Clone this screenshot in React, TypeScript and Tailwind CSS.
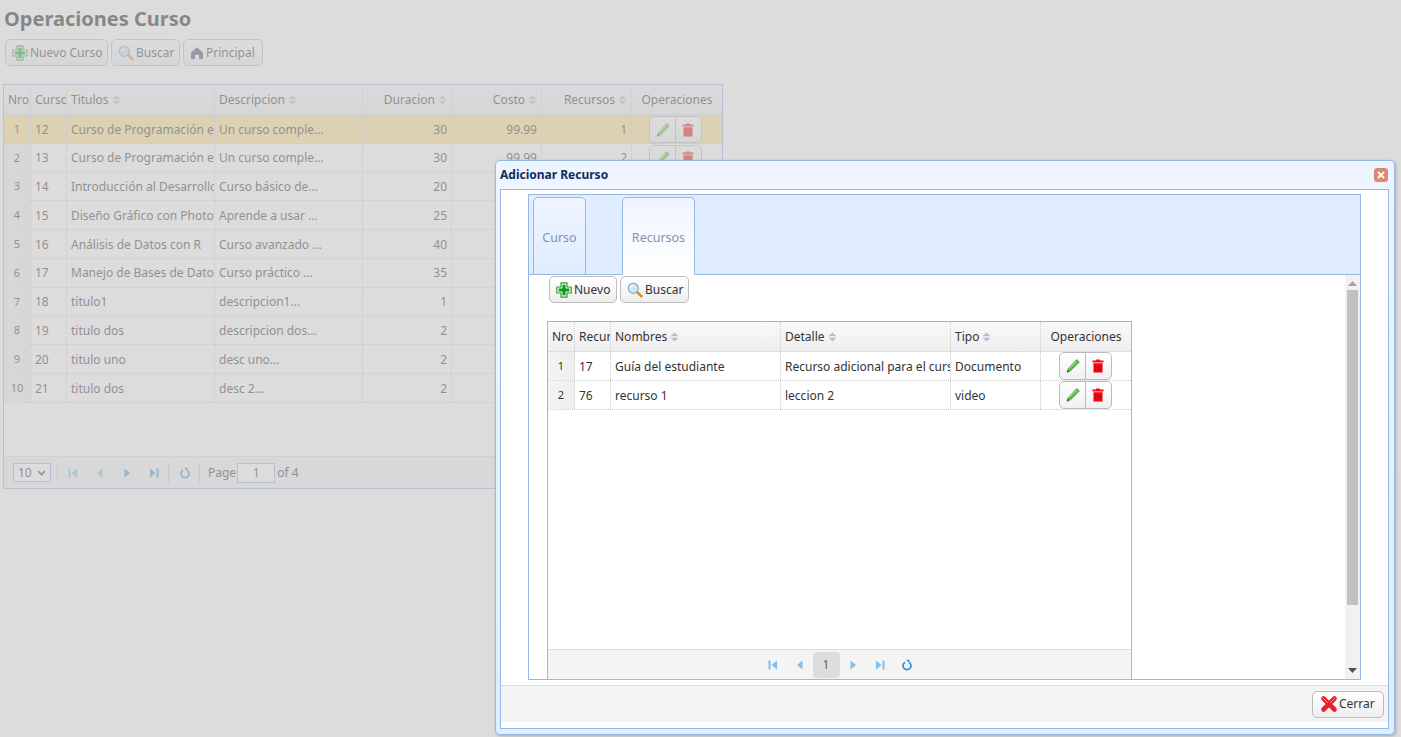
import React from "react";

const font = { fontFamily: '"Noto Sans", "Liberation Sans", sans-serif' };

function AddIcon() {
  return (
    <svg width="16" height="16" viewBox="0 0 16 16" className="shrink-0">
      <path d="M5 .8h6v4.200h4.200v6H11v4.200H5V11H.8V5H5z" fill="#e8f7e0" stroke="#3c9a3c" strokeWidth="1.200" strokeLinejoin="round" />
      <path d="M6.500 2.800h3v3.700h3.700v3H9.500v3.700h-3V9.500H2.800v-3h3.700z" fill="#0d9a20" />
    </svg>
  );
}
function SearchIcon() {
  return (
    <svg width="16" height="16" viewBox="0 0 16 16" className="shrink-0">
      <path d="M9.800 9.800l4.600 4.500" stroke="#d9922e" strokeWidth="2.600" strokeLinecap="round" />
      <circle cx="6.300" cy="6.300" r="5" fill="#cfe6f8" stroke="#8fa7bd" strokeWidth="1.200" />
      <path d="M3.400 6a3 3 0 0 1 2.800-2.700" stroke="#fff" strokeWidth="1.200" fill="none" />
    </svg>
  );
}
function HomeIcon() {
  return (
    <svg width="14" height="14" viewBox="0 0 14 14" className="shrink-0">
      <path d="M7 1.200L13 6.800V13H9V8.800H5V13H1V6.800z" fill="#3f4566" />
    </svg>
  );
}
function PencilIcon() {
  return (
    <svg width="16" height="16" viewBox="0 0 16 16">
      <path d="M11.800 1.500l2.600 2.500L5.400 13 2 14.300l1.100-3.500z" fill="#5cb83c" stroke="#3f9028" strokeWidth="0.600" strokeLinejoin="round" />
      <path d="M11.400 3.400l-7.400 7.400" stroke="#c5eeaa" strokeWidth="1" />
      <path d="M2 14.300l.7-2.200 1.500 1.500z" fill="#4a4a4a" />
    </svg>
  );
}
function TrashIcon() {
  return (
    <svg width="16" height="16" viewBox="0 0 16 16">
      <path d="M6.200 1.400h3.600l.5 1.100h3.200v1.900H2.500V2.500h3.200z" fill="#ff0a14" />
      <path d="M3.400 5.200h9.200v9.400H3.400z" fill="#ff0a14" />
      <path d="M5.800 6.600v6.600M8 6.600v6.600M10.200 6.600v6.600" stroke="#a80a10" strokeWidth="1" />
    </svg>
  );
}
function CancelIcon() {
  return (
    <svg width="18" height="18" viewBox="0 0 18 18" className="shrink-0">
      <path d="M3.500 3.500l11 11M14.500 3.500l-11 11" stroke="#e8222c" strokeWidth="4.600" strokeLinecap="round" />
      <path d="M3 3l4.500 4.500M15 3l-4.500 4.500" stroke="#fb9a9a" strokeWidth="1" strokeLinecap="round" />
    </svg>
  );
}
function SortIcon() {
  return (
    <svg width="9" height="10" viewBox="0 0 9 10" className="ml-[3px] shrink-0">
      <path d="M4.500 .5L8.500 4.300H.5z" fill="#b9bec5" />
      <path d="M4.500 9.500L8.500 5.700H.5z" fill="#b9bec5" />
    </svg>
  );
}
type PagerKind = "first" | "prev" | "next" | "last" | "reload";
function PagerIcon({ kind, strong }: { kind: PagerKind; strong?: boolean }) {
  const c = strong ? "#3a95dc" : "#7cc0ee";
  return (
    <svg width="12" height="12" viewBox="0 0 12 12" className="shrink-0">
      {kind === "first" && (
        <>
          <rect x="1.500" y="1.500" width="2" height="9" fill={c} />
          <path d="M10 1.500v9L4.500 6z" fill={c} />
        </>
      )}
      {kind === "prev" && <path d="M8.500 1.500v9L3 6z" fill={c} />}
      {kind === "next" && <path d="M3.500 1.500v9L9 6z" fill={c} />}
      {kind === "last" && (
        <>
          <rect x="8.500" y="1.500" width="2" height="9" fill={c} />
          <path d="M2 1.500v9L7.500 6z" fill={c} />
        </>
      )}
      {kind === "reload" && (
        <>
          <path d="M4 3.200a4 4 0 1 0 4 0" fill="none" stroke="#2f8fdc" strokeWidth="1.700" />
          <path d="M5 .8h3.400v3.200z" fill="#2f8fdc" />
        </>
      )}
    </svg>
  );
}

function Btn({ icon, label, w }: { icon: React.ReactNode; label: string; w: string }) {
  return (
    <div className={`${w} h-[27px] flex items-center pl-[6px] gap-[2px] rounded-[5px] border border-[#bbb] bg-gradient-to-b from-white to-[#eeeeee] text-[12px] text-[#333] whitespace-nowrap`}>
      {icon}
      <span className="pt-px">{label}</span>
    </div>
  );
}

function OpsBtn({ h }: { h: string }) {
  return (
    <div className={`flex w-[53px] ${h} rounded-[5px] border border-[#bbb] bg-gradient-to-b from-white to-[#f0f0f0]`}>
      <div className="w-[26px] flex items-center justify-center border-r border-[#bbb]"><PencilIcon /></div>
      <div className="flex-1 flex items-center justify-center pr-[2px]"><TrashIcon /></div>
    </div>
  );
}

const outerCols = "grid grid-cols-[27px_36px_148px_148px_89px_90px_90px_90px]";
const innerCols = "grid grid-cols-[27px_36px_170px_170px_90px_90px]";
const cellLine = "border-r border-dotted border-[#ccc]";

type OuterRow = [string, string, string, string, string, string, string];
const outerRows: OuterRow[] = [
  ["1", "12", "Curso de Programación en Python", "Un curso comple...", "30", "99.99", "1"],
  ["2", "13", "Curso de Programación en Java", "Un curso comple...", "30", "99.99", "2"],
  ["3", "14", "Introducción al Desarrollo Web", "Curso básico de...", "20", "49.99", "1"],
  ["4", "15", "Diseño Gráfico con Photoshop", "Aprende a usar ...", "25", "79.99", "0"],
  ["5", "16", "Análisis de Datos con R", "Curso avanzado ...", "40", "89.99", "0"],
  ["6", "17", "Manejo de Bases de Datos SQL", "Curso práctico ...", "35", "59.99", "2"],
  ["7", "18", "titulo1", "descripcion1...", "1", "1.00", "0"],
  ["8", "19", "titulo dos", "descripcion dos...", "2", "2.00", "0"],
  ["9", "20", "titulo uno", "desc uno...", "2", "2.00", "0"],
  ["10", "21", "titulo dos", "desc 2...", "2", "2.00", "0"],
];

function Head({ label, sort, right }: { label: string; sort?: boolean; right?: boolean }) {
  return (
    <div className={`${cellLine} flex items-center overflow-hidden whitespace-nowrap px-[4px] pt-px ${right ? "justify-end" : ""}`}>
      <span>{label}</span>
      {sort && <SortIcon />}
    </div>
  );
}
function Cell({ children, right }: { children?: React.ReactNode; right?: boolean }) {
  return (
    <div className={`${cellLine} flex items-center overflow-hidden whitespace-nowrap px-[4px] pt-px ${right ? "justify-end" : ""}`}>
      {children}
    </div>
  );
}

function Background() {
  return (
    <div className="px-[3px] text-[#2c2c2c]">
      <h1 className="pt-[6px] pl-[1px] text-[20px] leading-[26px] font-bold text-[#111]">Operaciones Curso</h1>
      <div className="flex gap-[3px] mt-[7px] ml-[2px]">
        <Btn icon={<AddIcon />} label="Nuevo Curso" w="w-[103px]" />
        <Btn icon={<SearchIcon />} label="Buscar" w="w-[69px]" />
        <Btn icon={<HomeIcon />} label="Principal" w="w-[80px]" />
      </div>
      <div className="mt-[18px] w-[720px] h-[405px] border border-[#95b8e7] flex flex-col text-[12px] bg-white">
        <div className={`${outerCols} h-[30px] shrink-0 bg-gradient-to-b from-[#f9f9f9] to-[#efefef] border-b border-[#ddd]`}>
          <Head label="Nro" />
          <Head label="Curso" />
          <Head label="Titulos" sort />
          <Head label="Descripcion" sort />
          <Head label="Duracion" sort right />
          <Head label="Costo" sort right />
          <Head label="Recursos" sort right />
          <div className="flex items-center justify-center pt-px">Operaciones</div>
        </div>
        <div className="flex-1">
          {outerRows.map((r, i) => (
            <div key={r[0]} className={`${outerCols} h-[28.8px] border-b border-dotted border-[#ccc] ${i === 0 ? "bg-[#ffe48d]" : ""}`}>
              <div className={`${cellLine} ${i === 0 ? "" : "bg-gradient-to-r from-[#f4f4f4] to-[#eeeeee]"} flex items-center justify-center text-[11px]`}>{r[0]}</div>
              <Cell>{r[1]}</Cell>
              <Cell>{r[2]}</Cell>
              <Cell>{r[3]}</Cell>
              <Cell right>{r[4]}</Cell>
              <Cell right>{r[5]}</Cell>
              <Cell right>{r[6]}</Cell>
              <div className="flex items-start pl-[17px] pt-px"><OpsBtn h="h-[27px]" /></div>
            </div>
          ))}
        </div>
        <div className="h-[32px] shrink-0 flex items-center bg-[#f4f4f4] border-t border-[#ddd] pl-[9px] pr-2">
          <div className="w-[38px] h-[19px] border border-[#95b8e7] bg-white flex items-center justify-between px-[4px]">
            <span>10</span>
            <svg width="9" height="6" viewBox="0 0 9 6"><path d="M1 1l3.500 3.500L8 1" stroke="#333" strokeWidth="1.600" fill="none" /></svg>
          </div>
          <div className="w-px h-[20px] bg-[#ccc] ml-[6px]" />
          <div className="flex gap-[15px] ml-[9px]">
            <PagerIcon kind="first" />
            <PagerIcon kind="prev" />
            <PagerIcon kind="next" strong />
            <PagerIcon kind="last" strong />
          </div>
          <div className="w-px h-[20px] bg-[#ccc] ml-[8px]" />
          <div className="ml-[10px]"><PagerIcon kind="reload" /></div>
          <div className="w-px h-[20px] bg-[#ccc] ml-[8px]" />
          <span className="ml-[8px]">Page</span>
          <div className="w-[38px] h-[20px] border border-[#95b8e7] bg-white flex items-center justify-center ml-px">1</div>
          <span className="ml-[2px]">of 4</span>
        </div>
      </div>
    </div>
  );
}

function Dialog() {
  return (
    <div className="absolute left-[495px] top-[160px] w-[900px] h-[575px] rounded-[5px] border border-[#95b8e7] bg-gradient-to-b from-[#eff5ff] to-[#e0ecff] pl-[4px] pr-[5px] shadow-[1px_1px_3px_#aaa] flex flex-col text-[12px]">
      <div className="h-[28px] shrink-0 flex items-center justify-between pr-px">
        <span className="font-bold text-[#0e2d5f]">Adicionar Recurso</span>
        <div className="w-[14px] h-[14px] rounded-[3px] bg-[#e2896d] border border-[#c98a76] flex items-center justify-center">
          <svg width="8" height="8" viewBox="0 0 8 8"><path d="M1 1l6 6M7 1L1 7" stroke="#fff" strokeWidth="1.800" /></svg>
        </div>
      </div>
      <div className="h-[540px] shrink-0 border border-[#95b8e7] bg-white flex flex-col">
        <div className="h-[495px] shrink-0 pt-[4px] pl-[27px] pr-[27px]">
          <div className="h-[486px] border border-[#95b8e7] flex flex-col">
            <div className="h-[80px] shrink-0 bg-[#e0ecff] border-b border-[#95b8e7] flex items-end pl-[4px] gap-[36px]">
              <div className="w-[53px] h-[78px] -mb-px pt-[4px] rounded-t-[5px] border border-[#95b8e7] bg-gradient-to-b from-[#eff5ff] to-[#e0ecff] flex items-center justify-center text-[12.5px] text-[#8592ad]">Curso</div>
              <div className="w-[73px] h-[78px] -mb-px pt-[4px] rounded-t-[5px] border border-[#95b8e7] border-b-white bg-gradient-to-b from-[#eff5ff] to-white flex items-center justify-center text-[12.5px] text-[#8592ad]">Recursos</div>
            </div>
            <div className="flex-1 min-h-0 flex">
              <div className="flex-1 min-w-0 pl-[18px] text-[#333]">
                <div className="flex gap-[3px] pl-[2px] pt-px">
                  <Btn icon={<AddIcon />} label="Nuevo" w="w-[68px]" />
                  <Btn icon={<SearchIcon />} label="Buscar" w="w-[69px]" />
                </div>
                <div className="mt-[18px] w-[585px] h-[358px] border border-[#95b8e7] border-b-0 flex flex-col">
                  <div className={`${innerCols} h-[30px] shrink-0 bg-gradient-to-b from-[#f9f9f9] to-[#efefef] border-b border-[#ddd]`}>
                    <Head label="Nro" />
                    <Head label="Recurso" />
                    <Head label="Nombres" sort />
                    <Head label="Detalle" sort />
                    <Head label="Tipo" sort />
                    <div className="flex items-center justify-center pt-px">Operaciones</div>
                  </div>
                  <div className="flex-1 min-h-0">
                    {[
                      ["1", "17", "Guía del estudiante", "Recurso adicional para el curso", "Documento"],
                      ["2", "76", "recurso 1", "leccion 2", "video"],
                    ].map((r) => (
                      <div key={r[0]} className={`${innerCols} h-[29px] border-b border-dotted border-[#ccc]`}>
                        <div className={`${cellLine} bg-gradient-to-r from-[#f4f4f4] to-[#eeeeee] flex items-center justify-center text-[11px]`}>{r[0]}</div>
                        <Cell>{r[1]}</Cell>
                        <Cell>{r[2]}</Cell>
                        <Cell>{r[3]}</Cell>
                        <Cell>{r[4]}</Cell>
                        <div className="flex items-start pl-[18px]"><OpsBtn h="h-[28px]" /></div>
                      </div>
                    ))}
                  </div>
                  <div className="h-[30px] shrink-0 bg-[#f4f4f4] border-t border-[#ddd] flex items-center justify-center">
                    <PagerIcon kind="first" />
                    <div className="ml-[15px]"><PagerIcon kind="prev" /></div>
                    <div className="ml-[7px] w-[27px] h-[26px] rounded-[4px] bg-[#ddd] flex items-center justify-center text-[#7a5a44]">1</div>
                    <div className="ml-[7px]"><PagerIcon kind="next" /></div>
                    <div className="ml-[15px]"><PagerIcon kind="last" /></div>
                    <div className="ml-[15px]"><PagerIcon kind="reload" /></div>
                  </div>
                </div>
              </div>
              <div className="w-[15px] shrink-0 bg-[#f1f1f1] flex flex-col items-center">
                <svg width="9" height="5" viewBox="0 0 9 5" className="mt-[6px]"><path d="M4.500 0L9 5H0z" fill="#a3a3a3" /></svg>
                <div className="w-[11px] h-[315px] bg-[#c1c1c1] mt-[4px]" />
                <div className="flex-1" />
                <svg width="9" height="5" viewBox="0 0 9 5" className="mb-[6px]"><path d="M4.500 5L9 0H0z" fill="#505050" /></svg>
              </div>
            </div>
          </div>
        </div>
        <div className="h-[37px] shrink-0 bg-[#f4f4f4] border-t border-[#ddd] flex items-center justify-end pr-[4px]">
          <div className="w-[72px] h-[27px] flex items-center pl-[7px] gap-px rounded-[5px] border border-[#bbb] bg-gradient-to-b from-white to-[#eeeeee] text-[#333]">
            <CancelIcon />
            <span>Cerrar</span>
          </div>
        </div>
      </div>
    </div>
  );
}

export default function App() {
  return (
    <div style={font} className="relative w-[1401px] h-[737px] overflow-hidden bg-white">
      <Background />
      <div className="absolute inset-0 bg-[#c8c8c8]/[.64]" />
      <Dialog />
    </div>
  );
}
